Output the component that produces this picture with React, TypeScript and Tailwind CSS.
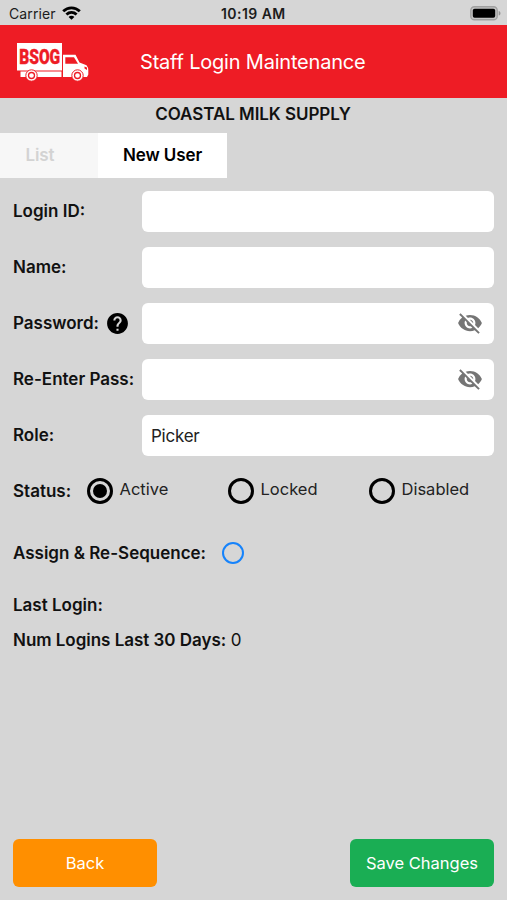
import React, { useState } from "react";
import { MdHelp, MdVisibilityOff } from "react-icons/md";

const statuses = ["Active", "Locked", "Disabled"];

const StatusBar: React.FC = () => (
  <div className="relative flex h-[25px] items-center justify-between pl-[9px] pr-[6px] pt-[2px] text-[13.5px] leading-none text-[#1c1c1c]">
    <div className="flex items-center gap-[6px]">
      <span className="text-[14px] tracking-[0.1px]">Carrier</span>
      <svg className="-mt-[2px]" width="19" height="14" viewBox="0 0 19 14" fill="none" stroke="#000" strokeWidth="2.8">
        <path d="M1.2 5.3C6 .6 13 .6 17.8 5.3" />
        <path d="M4.4 8.6C7.4 5.8 11.6 5.8 14.6 8.6" />
        <path d="M9.5 13.8L6.6 10.9C8.2 9.4 10.8 9.4 12.4 10.9Z" fill="#000" stroke="none" />
      </svg>
    </div>
    <span className="absolute left-[221px] text-[14px] font-semibold tracking-[0.45px]">10:19 AM</span>
    <svg className="-mt-[1px]" width="31" height="15" viewBox="0 0 31 15">
      <rect x=".8" y=".8" width="26.4" height="13" rx="3.6" fill="#c4c4c4" stroke="#a0a0a0" strokeWidth="1.4" />
      <rect x="2.8" y="2.8" width="22.4" height="9" rx="1.8" fill="#000" />
      <path d="M28.7 5v4.6c1.2-.4 1.8-1.2 1.8-2.3s-.6-1.900-1.800-2.300z" fill="#959595" />
    </svg>
  </div>
);

const TruckLogo: React.FC = () => (
  <svg className="mt-[2px]" width="72" height="39" viewBox="0 0 72 39">
    <path d="M0 0H45V27.500H0Z" fill="#fff" />
    <text x="2.200" y="21.300" fontFamily="'Roboto', sans-serif" fontWeight="900" fontSize="19.500" textLength="41" lengthAdjust="spacingAndGlyphs" fill="#ee1c25" stroke="#ee1c25" strokeWidth=".4">BSOG</text>
    <path d="M3.500 28.600H44.500V34H3.500Z" fill="#fff" />
    <path d="M46 11.800H58.500L62.500 19.500L69.500 22.200Q71.300 24.500 71.300 27V31.500L70 34H46Z" fill="#fff" />
    <path d="M48.300 14.300H57L61 20.700H48.300Z" fill="#ee1c25" />
    <path d="M67.500 23.500L70 24.500V27L67.500 25.500Z" fill="#ee1c25" />
    <g fill="#fff" stroke="#ee1c25">
      <circle cx="14.500" cy="32.500" r="5.700" strokeWidth="1" />
      <circle cx="14.500" cy="32.500" r="3" strokeWidth="1.300" />
      <circle cx="60.500" cy="32.500" r="5.700" strokeWidth="1" />
      <circle cx="60.500" cy="32.500" r="3" strokeWidth="1.300" />
    </g>
  </svg>
);

interface FieldProps {
  label: string;
  value?: string;
  help?: boolean;
  secret?: boolean;
}

const Field: React.FC<FieldProps> = ({ label, value = "", help, secret }) => (
  <div className="flex h-10 items-center">
    <label className="flex w-[129px] shrink-0 items-center whitespace-nowrap text-[17px] font-semibold">
      <span className="pt-[1px]">{label}</span>
      {help && <MdHelp className="ml-[6px]" size={25} color="#000" />}
    </label>
    <div className="flex h-[41px] flex-1 items-center rounded-[6px] bg-white pl-[9px] pr-[11px]">
      <input
        type={secret ? "password" : "text"}
        defaultValue={value}
        className="w-full min-w-0 flex-1 bg-transparent pt-[3px] text-[17px] tracking-[-0.25px] text-[#222] outline-none"
      />
      {secret && <MdVisibilityOff size={26} color="#757575" className="shrink-0" />}
    </div>
  </div>
);

const App: React.FC = () => {
  const [status, setStatus] = useState("Active");

  return (
    <div className="flex h-[900px] w-[507px] flex-col overflow-hidden bg-[#d6d6d6] font-['Inter','Liberation_Sans',sans-serif] text-[16.5px] text-[#111]">
      <StatusBar />
      <header className="grid h-[73px] grid-cols-[140px_1fr] items-center bg-[#ee1c25]">
        <div className="pl-[17px]">
          <TruckLogo />
        </div>
        <h1 className="text-[20px] tracking-[-0.2px] text-white">Staff Login Maintenance</h1>
      </header>
      <h2 className="flex h-[35px] items-center justify-center pb-[2px] pr-[1px] text-[17px] font-semibold tracking-[-0.05px]">COASTAL MILK SUPPLY</h2>
      <div className="flex h-[45px] text-[17px] font-semibold tracking-[-0.1px]">
        <button className="w-[98px] bg-[#f7f7f7] pt-[1px] pr-[18px] text-[#d3d3d3]">List</button>
        <button className="w-[129px] bg-white pt-[1px] text-black">New User</button>
      </div>

      <form className="flex flex-1 flex-col px-[13px] pt-[13px] pb-[13px]">
        <div className="flex flex-col gap-4">
          <Field label="Login ID:" />
          <Field label="Name:" />
          <Field label="Password:" help secret />
          <Field label="Re-Enter Pass:" secret />
          <Field label="Role:" value="Picker" />
        </div>

        <div className="mt-[23px] flex h-[26px] items-center">
          <span className="w-[73.5px] shrink-0 pt-[2px] text-[17px] font-semibold">Status:</span>
          {statuses.map((s) => (
            <button key={s} type="button" onClick={() => setStatus(s)} className="flex w-[141px] shrink-0 items-center gap-[7px]">
              <span className="flex size-[26px] shrink-0 items-center justify-center rounded-full border-3 border-black">
                {status === s && <span className="size-[14px] rounded-full bg-black" />}
              </span>
              <span className="pb-[4px] text-[#222]">{s}</span>
            </button>
          ))}
        </div>

        <div className="mt-[37px] flex h-6 items-center gap-[16px]">
          <span className="pt-[1px] text-[17px] font-semibold">Assign &amp; Re-Sequence:</span>
          <span className="size-[22px] rounded-full border-2 border-[#1683fb]" />
        </div>
        <p className="mt-[28px] h-6 text-[17px] font-semibold leading-6">Last Login:</p>
        <p className="mt-[11px] h-6 text-[17px] leading-6 tracking-[-0.03px]">
          <span className="font-semibold">Num Logins Last 30 Days:</span> 0
        </p>

        <div className="mt-auto flex justify-between text-white">
          <button type="button" className="h-12 w-36 rounded-[6px] bg-[#ff8f00]">Back</button>
          <button type="button" className="h-12 w-36 rounded-[6px] bg-[#1aae54]">Save Changes</button>
        </div>
      </form>
    </div>
  );
};

export default App;
